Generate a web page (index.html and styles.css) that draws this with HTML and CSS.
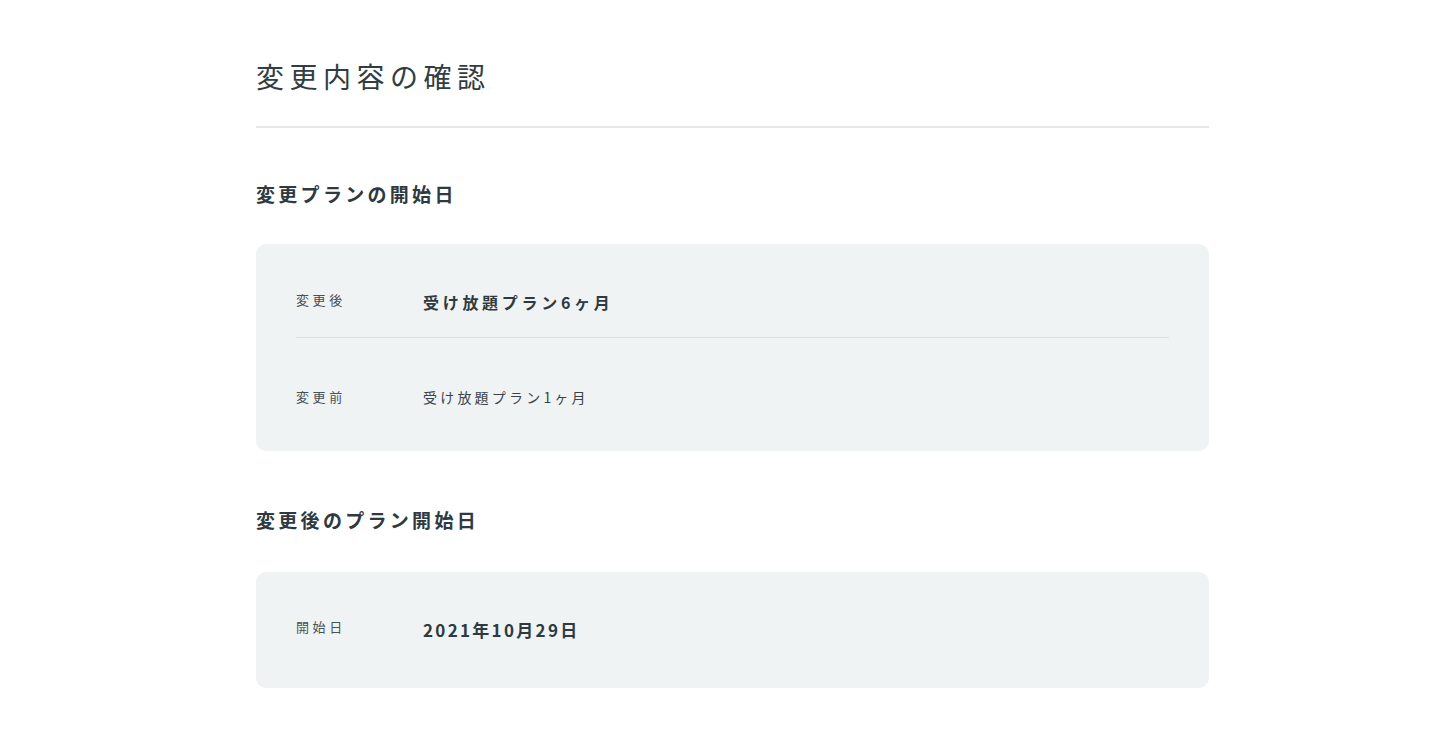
FILE: index.html
```html
<!DOCTYPE html>
<html lang="ja">
<head>
<meta charset="utf-8">
<title>変更内容の確認</title>
<link rel="stylesheet" href="styles.css">
</head>
<body>
<main class="page">
  <h1 class="page-title">変更内容の確認</h1>

  <section class="section">
    <h2 class="section-title">変更プランの開始日</h2>
    <div class="card">
      <div class="row row-first">
        <div class="label">変更後</div>
        <div class="value value-strong">受け放題プラン6ヶ月</div>
      </div>
      <div class="row row-last">
        <div class="label">変更前</div>
        <div class="value">受け放題プラン1ヶ月</div>
      </div>
    </div>
  </section>

  <section class="section">
    <h2 class="section-title">変更後のプラン開始日</h2>
    <div class="card">
      <div class="row row-single">
        <div class="label">開始日</div>
        <div class="value value-date">2021年10月29日</div>
      </div>
    </div>
  </section>
</main>
</body>
</html>
```
FILE: styles.css
```css
* { box-sizing: border-box; }

html, body {
  margin: 0;
  padding: 0;
  background: #ffffff;
}

body {
  font-family: "Noto Sans CJK JP", "Noto Sans", sans-serif;
  color: #2e3a40;
}

.page {
  width: 953px;
  margin: 0 0 0 256px;
  padding-top: 55px;
}

.page-title {
  margin: 0;
  font-size: 28px;
  font-weight: 400;
  line-height: 42px;
  letter-spacing: 5.5px;
  padding-bottom: 29px;
  border-bottom: 2px solid #e6e8e9;
  color: #313d42;
}

.section-title {
  margin: 0;
  font-size: 19px;
  font-weight: 700;
  line-height: 27px;
  letter-spacing: 3.3px;
}

.section:first-of-type .section-title { margin-top: 52px; }
.section + .section .section-title { margin-top: 55px; }

.card {
  margin-top: 37px;
  background: #f0f3f4;
  border-radius: 10px;
  padding: 0 40px;
}

.section + .section .card { margin-top: 39px; }

.row {
  display: flex;
  align-items: flex-start;
}

.row-first {
  padding: 46px 0 23px;
  border-bottom: 1px solid #dcdfe1;
}

.row-last {
  padding: 49px 0 43px;
}

.row-single {
  padding: 45px 0 45px;
}

.label {
  width: 127px;
  flex-shrink: 0;
  font-size: 13px;
  line-height: 20px;
  letter-spacing: 3.6px;
  color: #475156;
}

.value {
  font-size: 14px;
  line-height: 21px;
  letter-spacing: 3.2px;
  color: #3a4448;
}

.value-strong {
  font-size: 16px;
  line-height: 24px;
  font-weight: 700;
  letter-spacing: 3.7px;
  color: #2e3a40;
}

.value-date {
  font-size: 17px;
  line-height: 26px;
  font-weight: 700;
  letter-spacing: 2.3px;
  color: #2e3a40;
}
```
